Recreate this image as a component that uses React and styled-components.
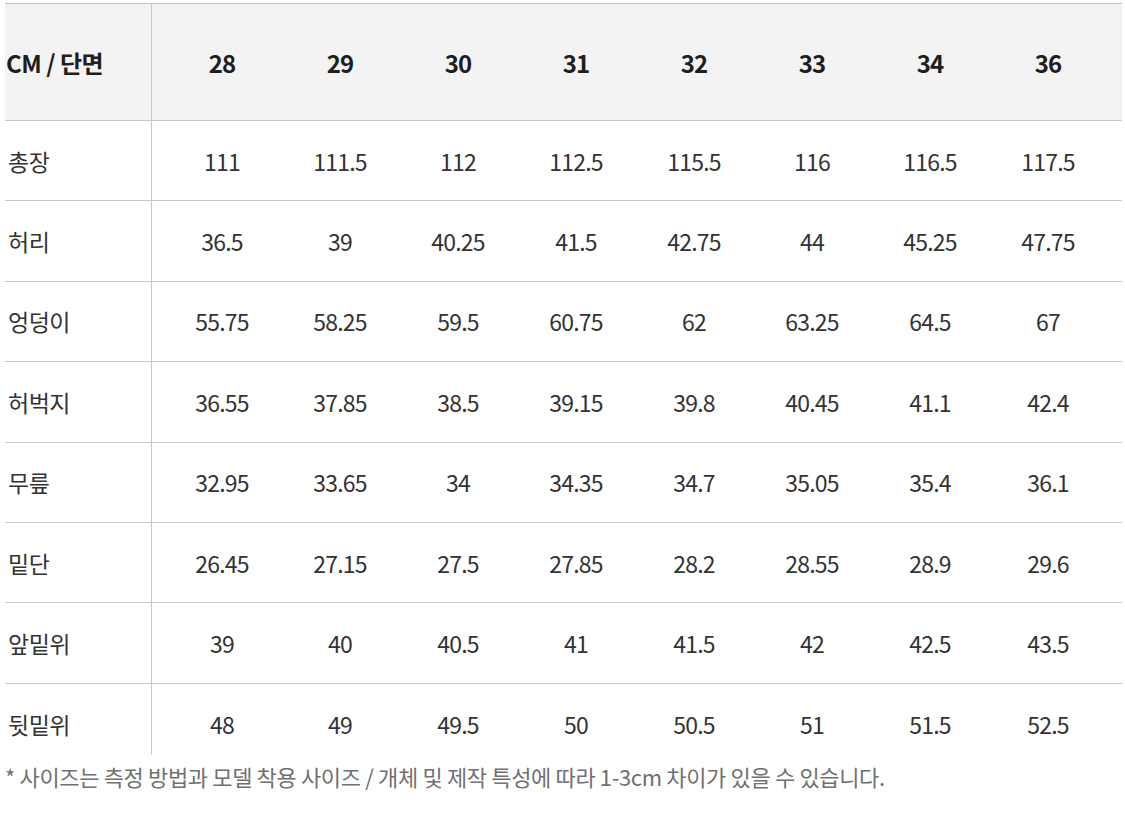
import styled, { createGlobalStyle } from 'styled-components';

const GlobalStyle = createGlobalStyle`
    body {
        margin: 0;
        background: #fff;
        font-family: "Noto Sans CJK KR", "Noto Sans", sans-serif;
    }
`;

const Page = styled.div`
    width: 1125px;
    padding: 3px 3px 0 5px;
    box-sizing: border-box;
`;

const Table = styled.div`
    border-top: 1px solid #c4c4c4;
`;

const Row = styled.div`
    display: flex;
    height: ${p => p.$head ? '117px' : p.$last ? '71px' : '80.4px'};
    background: ${p => p.$head ? '#f3f3f3' : '#fff'};
    border-bottom: ${p => p.$last ? 'none' : '1px solid #c8c8c8'};
    box-sizing: border-box;
    color: ${p => p.$head ? '#1e1e1e' : '#333'};
    font-weight: ${p => p.$head ? 700 : 400};
`;

const Label = styled.div`
    width: 147px;
    flex-shrink: 0;
    border-right: 1px solid #c8c8c8;
    display: flex;
    align-items: center;
    padding-left: ${p => p.$head ? '1px' : '3px'};
    padding-top: ${p => p.$last ? '9px' : '0'};
    font-size: ${p => p.$head ? '24px' : '23px'};
    letter-spacing: -0.5px;
    box-sizing: border-box;
`;

const Values = styled.div`
    display: flex;
    padding-left: 11px;
    padding-top: ${p => p.$last ? '9px' : '0'};
`;

const Cell = styled.div`
    width: 118px;
    display: flex;
    align-items: center;
    justify-content: center;
    font-size: ${p => p.$head ? '24px' : '23px'};
    font-weight: ${p => p.$head ? 600 : 400};
    letter-spacing: -0.8px;
`;

const Note = styled.p`
    margin: 6px 0 0 0;
    font-size: 22px;
    line-height: 30px;
    color: #707070;
    letter-spacing: -0.35px;
`;

const sizes = ['28', '29', '30', '31', '32', '33', '34', '36'];

const rows = [
    ['총장', '111', '111.5', '112', '112.5', '115.5', '116', '116.5', '117.5'],
    ['허리', '36.5', '39', '40.25', '41.5', '42.75', '44', '45.25', '47.75'],
    ['엉덩이', '55.75', '58.25', '59.5', '60.75', '62', '63.25', '64.5', '67'],
    ['허벅지', '36.55', '37.85', '38.5', '39.15', '39.8', '40.45', '41.1', '42.4'],
    ['무릎', '32.95', '33.65', '34', '34.35', '34.7', '35.05', '35.4', '36.1'],
    ['밑단', '26.45', '27.15', '27.5', '27.85', '28.2', '28.55', '28.9', '29.6'],
    ['앞밑위', '39', '40', '40.5', '41', '41.5', '42', '42.5', '43.5'],
    ['뒷밑위', '48', '49', '49.5', '50', '50.5', '51', '51.5', '52.5'],
];

const App = () => (
    <>
        <GlobalStyle />
        <Page>
            <Table>
                <Row $head>
                    <Label $head>CM / 단면</Label>
                    <Values>
                        {sizes.map(s => <Cell key={s} $head>{s}</Cell>)}
                    </Values>
                </Row>
                {rows.map(([name, ...vals], i) => {
                    const last = i === rows.length - 1;
                    return (
                        <Row key={name} $last={last}>
                            <Label $last={last}>{name}</Label>
                            <Values $last={last}>
                                {vals.map((v, j) => <Cell key={j}>{v}</Cell>)}
                            </Values>
                        </Row>
                    );
                })}
            </Table>
            <Note>* 사이즈는 측정 방법과 모델 착용 사이즈 / 개체 및 제작 특성에 따라 1-3cm 차이가 있을 수 있습니다.</Note>
        </Page>
    </>
);

export default App;
